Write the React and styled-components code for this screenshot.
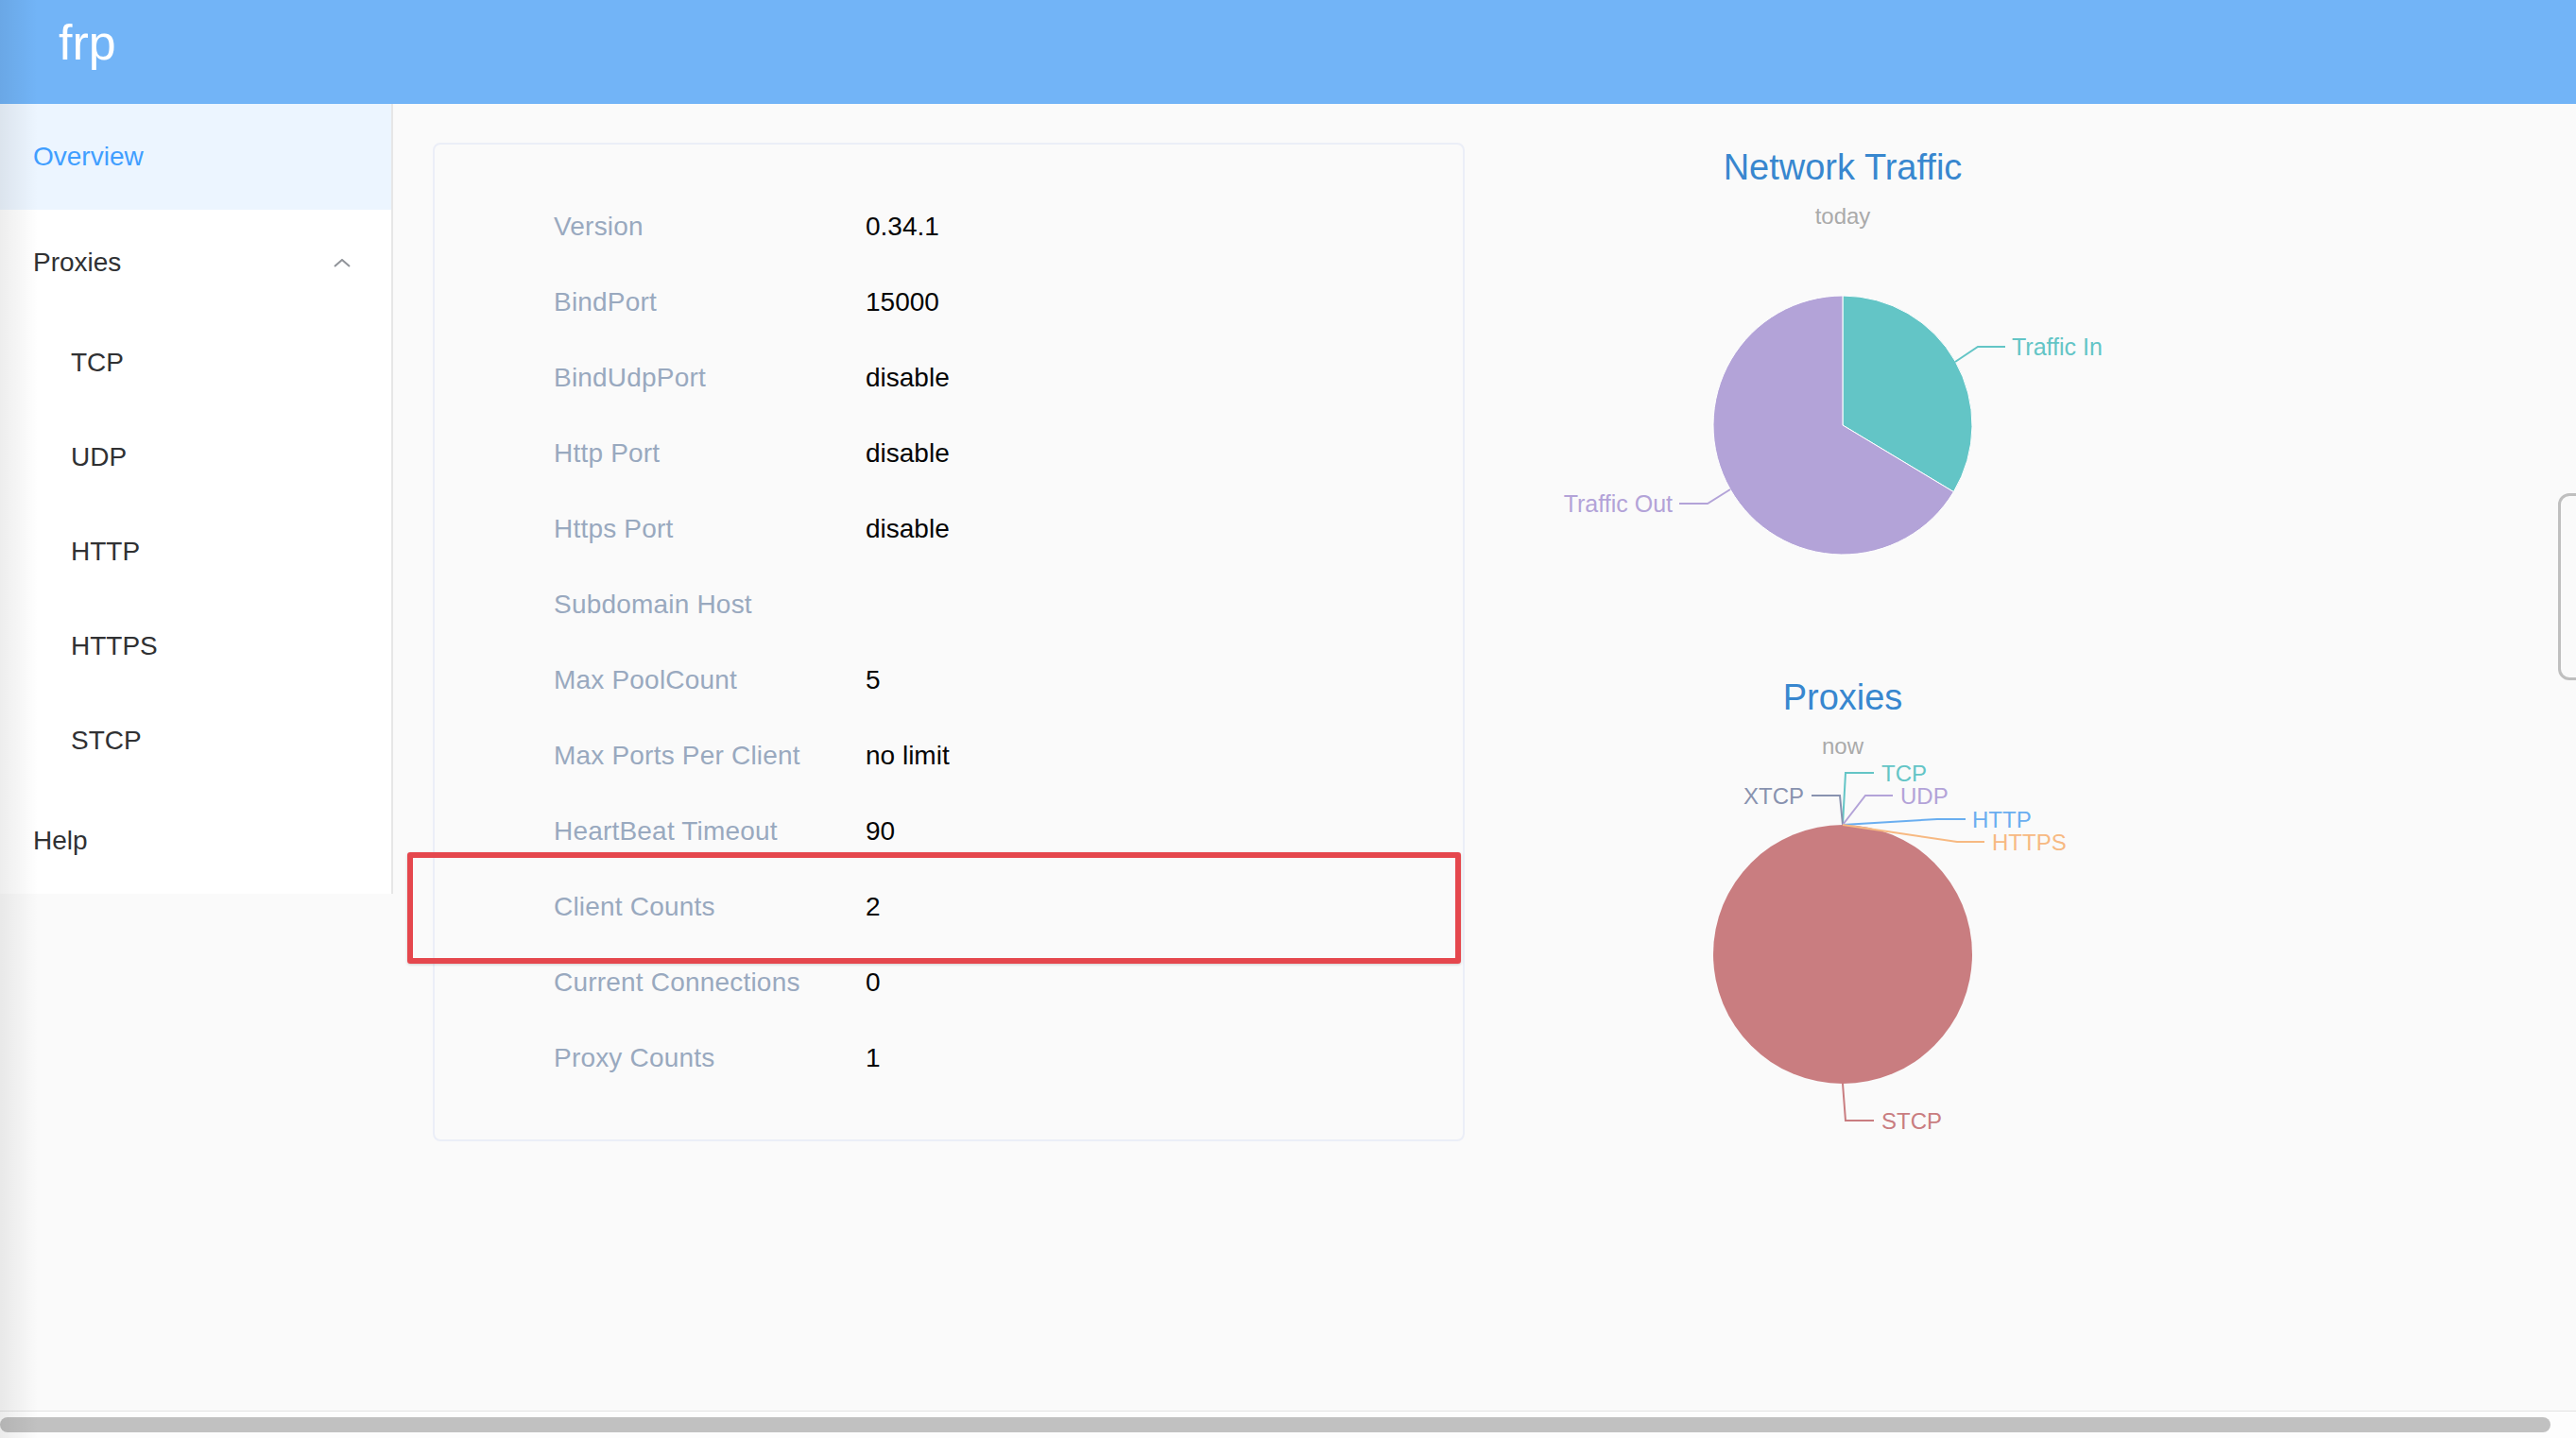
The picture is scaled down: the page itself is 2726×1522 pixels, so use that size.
import React from "react";
import styled, { createGlobalStyle } from "styled-components";

const GlobalStyle = createGlobalStyle`
  html, body {
    margin: 0;
    padding: 0;
    background: #fafafa;
    overflow: hidden;
  }
  body {
    font-family: "Liberation Sans", Arial, sans-serif;
  }
`;

const Page = styled.div`
  position: relative;
  width: 2726px;
  height: 1522px;
  display: flex;
  flex-direction: column;
  overflow: hidden;
  background: #fafafa;
`;

const Header = styled.header`
  height: 110px;
  flex-shrink: 0;
  display: flex;
  align-items: flex-start;
  padding-left: 62px;
  background: #72b4f7;
`;

const Logo = styled.div`
  margin-top: 19px;
  font-size: 52px;
  line-height: 52px;
  color: #fff;
`;

const Body = styled.div`
  flex: 1;
  min-height: 0;
  display: flex;
  align-items: flex-start;
`;

const Sidebar = styled.nav`
  width: 414px;
  flex-shrink: 0;
  background: #fff;
  border-right: 2px solid #e6e6e6;
`;

const MenuItem = styled.div`
  height: ${(p) => (p.$sub ? 100 : 112)}px;
  display: flex;
  align-items: center;
  justify-content: space-between;
  padding: 0 43px 0 ${(p) => (p.$sub ? 75 : 35)}px;
  font-size: 28px;
  color: ${(p) => (p.$active ? "#409eff" : "#303133")};
  background: ${(p) => (p.$active ? "#ecf5ff" : "transparent")};
`;

const Main = styled.main`
  display: flex;
  align-items: flex-start;
  padding: 41px 0 0 42px;
`;

const Card = styled.section`
  box-sizing: border-box;
  width: 1092px;
  padding: 47px 0 46px;
  border: 2px solid #ebeef7;
  border-radius: 8px;
  background: #fafafa;
`;

const Row = styled.div`
  position: relative;
  height: 80px;
  display: flex;
  align-items: center;
  padding-left: 126px;
  font-size: 28px;
`;

const Label = styled.span`
  width: 330px;
  color: #99a9bf;
  letter-spacing: 0.2px;
`;

const Value = styled.span`
  color: #050505;
`;

// red annotation frame drawn over the "Client Counts" row
const Highlight = styled.div`
  position: absolute;
  left: -29px;
  right: 2px;
  top: -18px;
  bottom: -20px;
  border: 6px solid #e5474d;
  border-radius: 3px;
  box-shadow: 0 1px 3px rgba(0, 0, 0, 0.18);
  pointer-events: none;
`;

const Charts = styled.div`
  width: 800px;
  margin-top: 4px;
  display: flex;
  flex-direction: column;
  align-items: center;
`;

const ChartTitle = styled.div`
  margin-top: ${(p) => p.$gap || 0}px;
  font-size: 38px;
  line-height: 44px;
  color: #3887cf;
`;

const ChartSub = styled.div`
  margin-top: 15px;
  font-size: 24px;
  line-height: 30px;
  color: #aaa;
`;

const PieSvg = styled.svg`
  display: block;
  overflow: visible;
  font-family: "Liberation Sans", Arial, sans-serif;
  font-size: ${(p) => p.$label || 24}px;
`;

const ScrollTrack = styled.div`
  height: 29px;
  flex-shrink: 0;
  box-sizing: border-box;
  padding-top: 6px;
  border-top: 1px solid #e3e3e3;
  background: #fdfdfd;
`;

const ScrollThumb = styled.div`
  width: 2699px;
  height: 16px;
  border-radius: 8px;
  background: #c1c1c1;
`;

const SideScrollHint = styled.div`
  position: absolute;
  left: 2707px;
  top: 522px;
  width: 40px;
  height: 198px;
  box-sizing: border-box;
  border: 3px solid #bfbfbf;
  border-radius: 12px;
`;

const EdgeShade = styled.div`
  position: absolute;
  left: 0;
  top: 0;
  bottom: 0;
  width: 40px;
  background: linear-gradient(to right, rgba(0, 0, 0, 0.07), rgba(0, 0, 0, 0));
  pointer-events: none;
`;

const serverInfo = [
  ["Version", "0.34.1"],
  ["BindPort", "15000"],
  ["BindUdpPort", "disable"],
  ["Http Port", "disable"],
  ["Https Port", "disable"],
  ["Subdomain Host", ""],
  ["Max PoolCount", "5"],
  ["Max Ports Per Client", "no limit"],
  ["HeartBeat Timeout", "90"],
  ["Client Counts", "2"],
  ["Current Connections", "0"],
  ["Proxy Counts", "1"],
];

const proxyTypes = ["TCP", "UDP", "HTTP", "HTTPS", "STCP"];

function Chevron() {
  return (
    <svg width="18" height="9" viewBox="0 0 18 9">
      <polyline points="1,8 9,1 17,8" fill="none" stroke="#909399" strokeWidth="2" />
    </svg>
  );
}

function TrafficPie() {
  return (
    <PieSvg width="800" height="400" $label={25}>
      <path d="M400,206 L400,69 A137,137 0 0 1 517.4,276.6 Z" fill="#63c5c6" stroke="#fff" strokeWidth="1" />
      <path d="M400,206 L517.4,276.6 A137,137 0 1 1 400,69 Z" fill="#b3a3d8" stroke="#fff" strokeWidth="1" />
      <polyline points="519,139 543,123 572,123" fill="none" stroke="#63c5c6" strokeWidth="2" />
      <text x="579" y="123" dominantBaseline="central" fill="#63c5c6">Traffic In</text>
      <polyline points="281,274 257,289 227,289" fill="none" stroke="#b3a3d8" strokeWidth="2" />
      <text x="220" y="289" dominantBaseline="central" textAnchor="end" fill="#b3a3d8">Traffic Out</text>
    </PieSvg>
  );
}

const proxyLabels = [
  { name: "TCP", color: "#63c5c6", pts: "400,68 403,13 433,13", x: 441, y: 13 },
  { name: "XTCP", color: "#8892af", pts: "400,68 397,37 367,37", x: 359, y: 37, end: true },
  { name: "UDP", color: "#b3a3d8", pts: "400,68 424,37 453,37", x: 461, y: 37 },
  { name: "HTTP", color: "#6aaef0", pts: "400,68 500,62 530,62", x: 537, y: 62 },
  { name: "HTTPS", color: "#f7b982", pts: "400,68 521,86 550,86", x: 558, y: 86 },
  { name: "STCP", color: "#c97d80", pts: "400,342 403,381 433,381", x: 441, y: 381 },
];

function ProxyPie() {
  return (
    <PieSvg width="800" height="420">
      <circle cx="400" cy="205" r="137" fill="#c97d80" />
      {proxyLabels.map((l) => (
        <g key={l.name}>
          <polyline points={l.pts} fill="none" stroke={l.color} strokeWidth="2" />
          <text
            x={l.x}
            y={l.y}
            dominantBaseline="central"
            textAnchor={l.end ? "end" : "start"}
            fill={l.color}
          >
            {l.name}
          </text>
        </g>
      ))}
    </PieSvg>
  );
}

export default function App() {
  return (
    <Page>
      <GlobalStyle />
      <Header>
        <Logo>frp</Logo>
      </Header>
      <Body>
        <Sidebar>
          <MenuItem $active>Overview</MenuItem>
          <MenuItem>
            Proxies
            <Chevron />
          </MenuItem>
          {proxyTypes.map((t) => (
            <MenuItem $sub key={t}>
              {t}
            </MenuItem>
          ))}
          <MenuItem>Help</MenuItem>
        </Sidebar>
        <Main>
          <Card>
            {serverInfo.map(([label, value]) => (
              <Row key={label}>
                <Label>{label}</Label>
                <Value>{value}</Value>
                {label === "Client Counts" && <Highlight />}
              </Row>
            ))}
          </Card>
          <Charts>
            <ChartTitle>Network Traffic</ChartTitle>
            <ChartSub>today</ChartSub>
            <TrafficPie />
            <ChartTitle $gap={72}>Proxies</ChartTitle>
            <ChartSub>now</ChartSub>
            <ProxyPie />
          </Charts>
        </Main>
      </Body>
      <ScrollTrack>
        <ScrollThumb />
      </ScrollTrack>
      <SideScrollHint />
      <EdgeShade />
    </Page>
  );
}
